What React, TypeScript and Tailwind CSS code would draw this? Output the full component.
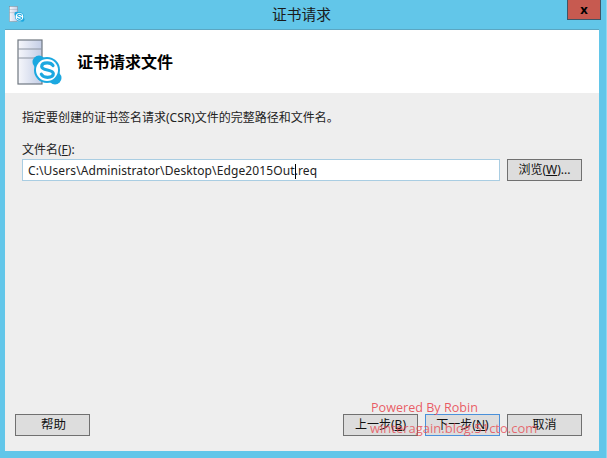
const font = "[font-family:'Noto_Sans','Noto_Sans_CJK_SC',sans-serif]";

function ServerIcon({ size }: { size: number }) {
  return (
    <svg width={size} height={size} viewBox="0 0 46 46" className="block">
      <defs>
        <linearGradient id="srv" x1="0" y1="0" x2="1" y2="0">
          <stop offset="0" stopColor="#f6f7fb" />
          <stop offset="1" stopColor="#c3cde6" />
        </linearGradient>
      </defs>
      <rect x="1" y="1" width="24" height="44" fill="url(#srv)" stroke="#6f7780" strokeWidth="1.2" />
      <line x1="1" y1="10" x2="25" y2="10" stroke="#8c94a0" />
      <line x1="1" y1="19" x2="25" y2="19" stroke="#8c94a0" />
      {/* skype badge */}
      <circle cx="30" cy="31" r="13" fill="#1ba8e0" />
      <circle cx="22" cy="23" r="6.500" fill="#1ba8e0" />
      <circle cx="38" cy="39" r="6.500" fill="#1ba8e0" />
      <circle cx="30" cy="31" r="11" fill="#fff" />
      <path d="M36 26.500c-1-1.700-3-2.700-5.800-2.700-3.500 0-5.500 1.600-5.500 3.700 0 4.800 11.600 2.300 11.600 7.300 0 2.100-2.200 3.500-5.800 3.500-3 0-5.200-1.100-6.200-3.200" fill="none" stroke="#1ba8e0" strokeWidth="3.200" strokeLinecap="round" />
    </svg>
  );
}

function Btn({ children, focused }: { children: React.ReactNode; focused?: boolean }) {
  return (
    <button className={`w-[75px] h-[22px] flex items-center justify-center bg-[#dddddd] border text-[12px] leading-none text-[#111] ${focused ? "border-[#4a90d9]" : "border-[#707070]"}`}>
      {children}
    </button>
  );
}

export default function App() {
  return (
    <div className={`relative w-[607px] h-[458px] overflow-hidden bg-[#62c6e9] flex flex-col ${font}`}>
      <div className="h-[29px] grid grid-cols-[1fr_auto_1fr] items-start">
        <div className="pl-[9px] pt-[6px]">
          <ServerIcon size={16} />
        </div>
        <div className="text-[14.750px] leading-[28px] text-[#1a1a1a] mr-[4px]">证书请求</div>
        <div className="flex justify-end pr-[6px]">
          <div className="w-[34px] h-[20px] bg-[#c75a50] border-x border-b border-[#3f5566] flex items-center justify-center text-[13px] font-bold leading-none text-black">
            x
          </div>
        </div>
      </div>

      <div className="border-t border-[#5ba6c2] ml-[5px] mr-[8px] h-[422px] flex flex-col">
        <div className="h-[63px] bg-white flex items-center pl-[12px] shrink-0">
          <ServerIcon size={46} />
          <div className="ml-[14px] text-[16px] font-bold text-black leading-none">证书请求文件</div>
        </div>

        <div className="flex-1 bg-[#eeeeee] flex flex-col">
          <div className="pl-[17px] pt-[16px] text-[12px] leading-[18px] text-[#222]">
            指定要创建的证书签名请求(CSR)文件的完整路径和文件名。
          </div>
          <div className="pl-[17px] pt-[14px] text-[12px] leading-[18px] text-[#222]">
            文件名(<span className="underline">F</span>):
          </div>
          <div className="flex px-[17px] gap-[7px]">
            <div className="w-[478px] h-[22px] bg-white border border-[#a9cde2] flex items-center pl-[5px] pt-[2px] text-[12px] tracking-[0.11px] text-[#222]">
              <span>C:\Users\Administrator\Desktop\Edge2015Out</span>
              <span className="w-px h-[15px] bg-black -mr-px" />
              <span>.req</span>
            </div>
            <Btn>
              <span>浏览(<span className="underline">W</span>)...</span>
            </Btn>
          </div>
          <div className="mt-auto flex pl-[10px] pr-[17px] pb-[15px] gap-[7px]">
            <Btn>
              <span className="text-[12.500px] ml-[2px]">帮助</span>
            </Btn>
            <div className="flex-1" />
            <Btn>
              <span>上一步(<span className="underline">B</span>)</span>
            </Btn>
            <Btn focused>
              <span>下一步(<span className="underline">N</span>)</span>
            </Btn>
            <Btn>取消</Btn>
          </div>
        </div>
      </div>

      <div className="absolute right-0 top-0 bottom-0 w-px bg-[#8fd6ee]" />

      <div className="absolute left-[371px] top-[400px] text-[12.600px] leading-[16px] font-medium text-[#e8414a]/85 font-['Open_Sans',sans-serif]">
        Powered By Robin
      </div>
      <div className="absolute left-[370px] top-[420px] text-[13px] leading-[16px] font-medium text-[#e8414a]/75 font-['Open_Sans',sans-serif]">
        winteragain.blog.51cto.com
      </div>
    </div>
  );
}
